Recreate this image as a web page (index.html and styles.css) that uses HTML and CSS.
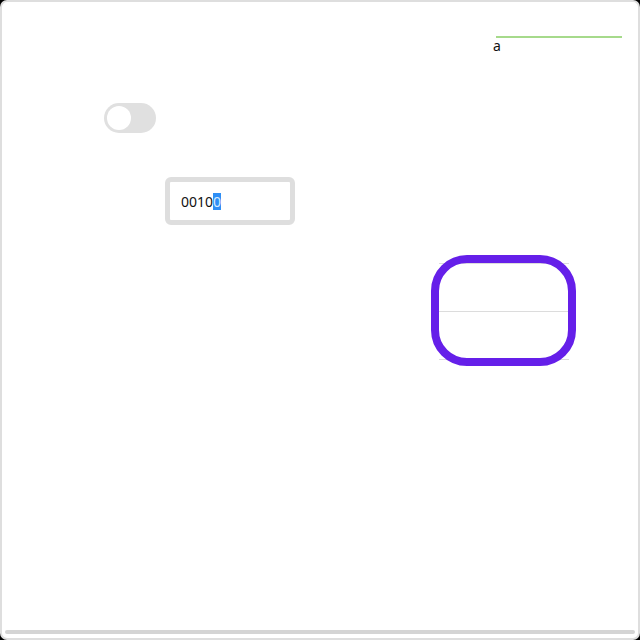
FILE: index.html
```html
<!DOCTYPE html>
<html>
<head>
<meta charset="utf-8">
<link rel="stylesheet" href="styles.css">
</head>
<body>
<div class="frame">
  <div class="top">
    <div class="underline"></div>
    <div class="letter">a</div>
  </div>
  <div class="toggle"><div class="knob"></div></div>
  <div class="field"><span>0010</span><span class="sel">0</span></div>
  <div class="grid-wrap">
    <div class="rows">
      <div class="row"></div>
      <div class="row"></div>
    </div>
    <div class="ring"></div>
  </div>
  <div class="scrollbar"></div>
</div>
</body>
</html>
```
FILE: styles.css
```css
html { background: #000; }
body { margin: 0; }
.frame {
  box-sizing: border-box;
  width: 640px;
  height: 640px;
  background: #fff;
  border: 2px solid #dedede;
  border-radius: 7px;
  display: flex;
  flex-direction: column;
  align-items: flex-start;
  font-family: "Noto Sans", sans-serif;
  color: #111;
}
.top {
  margin-top: 34px;
  margin-left: 491px;
}
.underline {
  width: 126px;
  height: 2px;
  margin-left: 3px;
  background: #a6da8b;
}
.letter {
  font-size: 14px;
  line-height: 15px;
}
.toggle {
  margin-top: 50px;
  margin-left: 102px;
  width: 52px;
  height: 30px;
  border-radius: 15px;
  background: #e0e0e0;
  display: flex;
  align-items: center;
  padding-left: 3px;
  box-sizing: border-box;
}
.knob {
  width: 24px;
  height: 24px;
  border-radius: 50%;
  background: #fff;
}
.field {
  margin-top: 44px;
  margin-left: 163px;
  box-sizing: border-box;
  width: 130px;
  height: 48px;
  border: 5px solid #dedede;
  border-radius: 6px;
  padding-left: 11px;
  display: flex;
  align-items: center;
  font-size: 14px;
  line-height: 17px;
  color: #111;
}
.sel {
  background: #2f8ff5;
  color: #d8ecff;
}
.grid-wrap {
  margin-top: 30px;
  margin-left: 429px;
  width: 145px;
  height: 111px;
  position: relative;
}
.rows {
  box-sizing: border-box;
  margin: 8px 0 0 8px;
  width: 130px;
  height: 97px;
  border-top: 1px solid #dcdcdc;
  border-bottom: 1px solid #dcdcdc;
}
.row {
  height: 47px;
}
.row + .row {
  border-top: 1px solid #dcdcdc;
}
.ring {
  position: absolute;
  inset: 0;
  border: 8px solid #651fe9;
  border-radius: 36px;
}
.scrollbar {
  margin-top: auto;
  margin-bottom: 4px;
  margin-left: 3px;
  width: 630px;
  height: 4px;
  border-radius: 2px;
  background: #d4d4d4;
}
```
